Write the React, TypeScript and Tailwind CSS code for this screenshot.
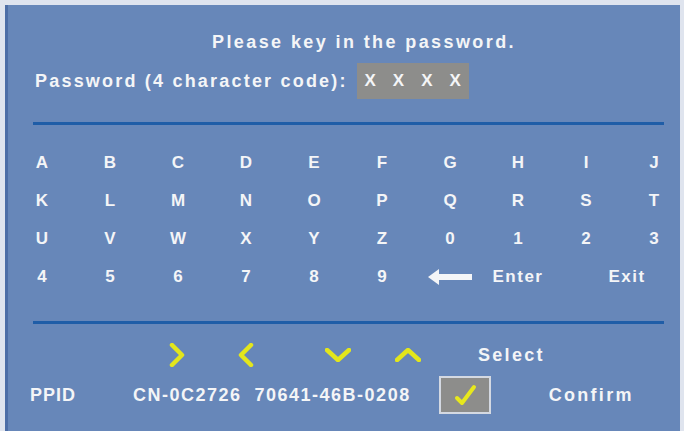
import React from 'react';

const font = { fontFamily: '"Liberation Sans", Arial, sans-serif' };

const rows: string[][] = [
  ['A', 'B', 'C', 'D', 'E', 'F', 'G', 'H', 'I', 'J'],
  ['K', 'L', 'M', 'N', 'O', 'P', 'Q', 'R', 'S', 'T'],
  ['U', 'V', 'W', 'X', 'Y', 'Z', '0', '1', '2', '3'],
];

const Chevron = ({ d, w, h }: { d: string; w: number; h: number }) => (
  <svg width={w} height={h} viewBox={`0 0 ${w} ${h}`} fill="none">
    <path d={d} stroke="#e3e61c" strokeWidth={4.5} strokeLinecap="round" strokeLinejoin="round" />
  </svg>
);

const Key = ({ children }: { children: React.ReactNode }) => (
  <div className="flex h-[38px] items-center justify-center text-[17px] font-bold text-[#f4f5f7]">
    {children}
  </div>
);

export default function App() {
  return (
    <div className="h-[431px] w-[684px] overflow-hidden bg-[#dfe4ee] pl-[5px] pr-[4px] pt-[5px]" style={font}>
      <div className="flex h-full flex-col border-l-[3px] border-[#4d6ea6] bg-[#6787b9] text-[#f4f5f7]">
        {/* header */}
        <div className="pt-[24px] text-center text-[18px] font-bold leading-[27px] tracking-[2.4px]">
          <span className="pl-[40px]">Please key in the password.</span>
        </div>
        <div className="mt-[7px] flex items-center pl-[27px]">
          <span className="text-[18px] font-bold tracking-[2.2px]">Password (4 character code):</span>
          <div className="ml-[9px] flex h-[36px] w-[112px] items-center justify-center gap-[17px] bg-[#8d8d8b] text-[17px] font-bold">
            <span>X</span>
            <span>X</span>
            <span>X</span>
            <span>X</span>
          </div>
        </div>
        <div className="ml-[25px] mt-[23px] h-[3px] w-[631px] bg-[#1f5da7]" />

        {/* keyboard */}
        <div className="mt-[19px] grid grid-cols-[repeat(10,68px)]">
          {rows.map((row) =>
            row.map((k) => <Key key={k}>{k}</Key>)
          )}
          {['4', '5', '6', '7', '8', '9'].map((k) => (
            <Key key={k}>{k}</Key>
          ))}
          <div className="flex h-[38px] items-center justify-center">
            <svg width="46" height="18" viewBox="0 0 46 18">
              <path d="M1 9 L12 1 L12 6 L45 6 L45 12 L12 12 L12 17 Z" fill="#f4f5f7" />
            </svg>
          </div>
          <Key>
            <span className="tracking-[1.5px]">Enter</span>
          </Key>
          <div className="col-span-2 flex h-[38px] items-center justify-center pl-[14px] text-[17px] font-bold tracking-[1.5px]">
            Exit
          </div>
        </div>

        <div className="ml-[25px] mt-[25px] h-[3px] w-[631px] bg-[#1f5da7]" />

        {/* navigation hints */}
        <div className="mt-[19px] flex h-[24px] items-center">
          <div className="ml-[161px]">
            <Chevron w={16} h={24} d="M3 2 L13 12 L3 22" />
          </div>
          <div className="ml-[53px]">
            <Chevron w={16} h={24} d="M13 2 L3 12 L13 22" />
          </div>
          <div className="ml-[71px]">
            <Chevron w={26} h={14} d="M2 2 L13 12 L24 2" />
          </div>
          <div className="ml-[44px]">
            <Chevron w={26} h={14} d="M2 12 L13 2 L24 12" />
          </div>
          <span className="ml-[57px] text-[18px] font-bold tracking-[2.3px]">Select</span>
        </div>

        <div className="mt-[9px] flex items-center">
          <span className="ml-[22px] w-[103px] text-[18px] font-bold tracking-[1px]">PPID</span>
          <span className="text-[18px] font-bold tracking-[1.5px]">CN-0C2726&nbsp;&nbsp;70641-46B-0208</span>
          <div className="ml-[28px] flex h-[38px] w-[52px] items-center justify-center border-2 border-[#d4d9e2] bg-[#8d8d8b]">
            <svg width="26" height="24" viewBox="0 0 26 24">
              <path d="M5 15 L10 20 L22 4" fill="none" stroke="#e8e81c" strokeWidth={4} strokeLinecap="round" strokeLinejoin="round" />
            </svg>
          </div>
          <span className="ml-[58px] text-[18px] font-bold tracking-[2.3px]">Confirm</span>
        </div>
      </div>
    </div>
  );
}
